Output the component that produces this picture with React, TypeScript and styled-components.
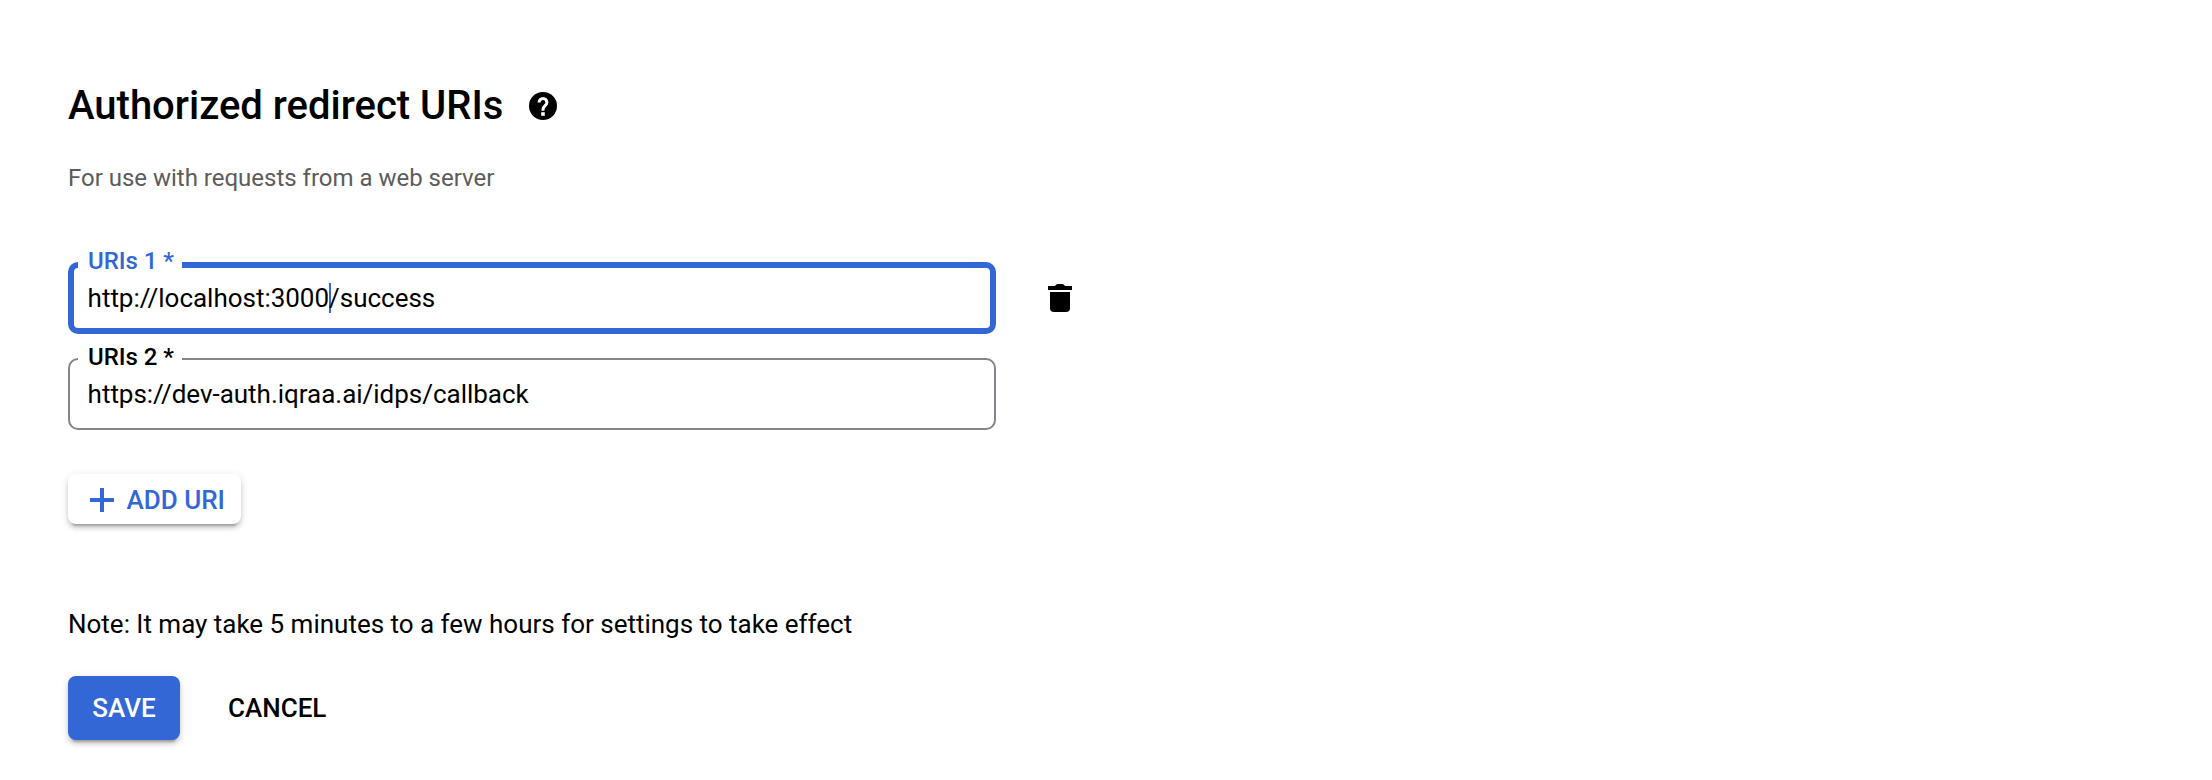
import React from "react";
import styled, { createGlobalStyle } from "styled-components";

const BLUE = "#3367d6";

const GlobalStyle = createGlobalStyle`
  *, *::before, *::after { box-sizing: border-box; }
  body {
    margin: 0;
    background: #fff;
    color: #000;
    font-family: Roboto, sans-serif;
  }
`;

const Page = styled.main`
  display: flex;
  flex-direction: column;
  align-items: flex-start;
  min-height: 780px;
  padding: 82px 68px 0;
`;

const Header = styled.header`
  display: flex;
  align-items: center;
  gap: 25.6px;
`;

const Title = styled.h2`
  margin: 0;
  font-size: 40px;
  font-weight: 500;
  line-height: 48px;
`;

const HelpIconSvg = styled.svg`
  display: block;
  width: 28px;
  height: 28px;
`;

const Subtitle = styled.p`
  margin: 32px 0 0;
  font-size: 24px;
  line-height: 32px;
  letter-spacing: -0.01px;
  color: #5c5c5c;
`;

const FieldList = styled.div`
  display: flex;
  flex-direction: column;
  gap: 24px;
  margin-top: 68px;
`;

const FieldRow = styled.div`
  display: flex;
  align-items: center;
  gap: 52px;
`;

const FieldBox = styled.div`
  position: relative;
  width: 928px;
  height: 72px;
`;

const FieldLabel = styled.label<{ $focused?: boolean }>`
  position: absolute;
  top: -15px;
  left: 10px;
  width: 104px;
  padding-left: 10px;
  background: #fff;
  color: ${(p) => (p.$focused ? BLUE : "#000")};
  font-size: 24px;
  font-weight: 500;
  line-height: 28px;
  letter-spacing: -0.05px;
  white-space: nowrap;
`;

const FieldValue = styled.div<{ $focused?: boolean }>`
  display: flex;
  align-items: center;
  height: 100%;
  padding-left: ${(p) => (p.$focused ? 13.6 : 17.6)}px;
  border: ${(p) => (p.$focused ? `6px solid ${BLUE}` : "2px solid #80868b")};
  border-radius: 10px;
  font-size: 26px;
  letter-spacing: -0.02px;
  line-height: 36px;
`;

const Caret = styled.span`
  width: 2px;
  height: 30px;
  margin-right: -2px;
  background: ${BLUE};
`;

const IconButton = styled.button`
  display: flex;
  padding: 0;
  border: 0;
  background: none;
  color: #000;
`;

const AddButton = styled.button`
  display: flex;
  align-items: center;
  gap: 12.6px;
  width: 173px;
  height: 50px;
  margin-top: 44px;
  padding: 2px 0 0 22px;
  border: 0;
  border-radius: 8px;
  background: #fff;
  box-shadow: 0 6px 2px -4px rgba(0, 0, 0, 0.2), 0 4px 4px rgba(0, 0, 0, 0.14),
    0 2px 10px rgba(0, 0, 0, 0.12);
  color: ${BLUE};
  font: 500 26px/36px Roboto, sans-serif;
  white-space: nowrap;
`;

const Note = styled.p`
  margin: 82px 0 0;
  font-size: 26px;
  line-height: 36px;
  letter-spacing: -0.01px;
`;

const Actions = styled.div`
  display: flex;
  align-items: center;
  gap: 48px;
  margin-top: 34px;
`;

const ActionButton = styled.button<{ $primary?: boolean }>`
  height: 64px;
  width: ${(p) => (p.$primary ? "112px" : "auto")};
  padding: 0;
  border: 0;
  border-radius: 8px;
  background: ${(p) => (p.$primary ? BLUE : "transparent")};
  box-shadow: ${(p) =>
    p.$primary
      ? "0 6px 2px -4px rgba(0,0,0,.2), 0 4px 4px rgba(0,0,0,.14), 0 2px 10px rgba(0,0,0,.12)"
      : "none"};
  color: ${(p) => (p.$primary ? "#fff" : "#000")};
  font: 500 26px/36px Roboto, sans-serif;
`;

const HelpIcon = () => (
  <HelpIconSvg viewBox="0 0 28 28">
    <circle cx="14" cy="14" r="14" fill="#000" />
    <path
      d="M10.1 10.400a3.900 3.900 0 1 1 7.800 0c0 3.100-3.900 3.400-3.900 7v1.300"
      fill="none"
      stroke="#fff"
      strokeWidth="3"
    />
    <rect x="12.200" y="20.200" width="3.600" height="3.600" fill="#fff" />
  </HelpIconSvg>
);

const TrashIcon = () => (
  <svg width="24" height="28" viewBox="0 0 24 28" fill="currentColor">
    <path d="M0 2h7c.8-1.300 1.600-2 3-2h4c1.400 0 2.200.7 3 2h7v4H0z" />
    <path d="M2 8h20v16a4 4 0 0 1-4 4H6a4 4 0 0 1-4-4z" />
  </svg>
);

const PlusIcon = () => (
  <svg width="24" height="24" viewBox="0 0 24 24" fill="currentColor">
    <path d="M10 0h4v10h10v4H14v10h-4V14H0v-4h10z" />
  </svg>
);

export default function App() {
  return (
    <>
      <GlobalStyle />
      <Page>
        <Header>
          <Title>Authorized redirect URIs</Title>
          <HelpIcon />
        </Header>
        <Subtitle>For use with requests from a web server</Subtitle>
        <FieldList>
          <FieldRow>
            <FieldBox>
              <FieldValue $focused>
                <span>http://localhost:3000</span>
                <Caret />
                <span>/success</span>
              </FieldValue>
              <FieldLabel $focused>URIs 1 *</FieldLabel>
            </FieldBox>
            <IconButton aria-label="Delete">
              <TrashIcon />
            </IconButton>
          </FieldRow>
          <FieldRow>
            <FieldBox>
              <FieldValue>https://dev-auth.iqraa.ai/idps/callback</FieldValue>
              <FieldLabel>URIs 2 *</FieldLabel>
            </FieldBox>
          </FieldRow>
        </FieldList>
        <AddButton>
          <PlusIcon />
          ADD URI
        </AddButton>
        <Note>Note: It may take 5 minutes to a few hours for settings to take effect</Note>
        <Actions>
          <ActionButton $primary>SAVE</ActionButton>
          <ActionButton>CANCEL</ActionButton>
        </Actions>
      </Page>
    </>
  );
}
